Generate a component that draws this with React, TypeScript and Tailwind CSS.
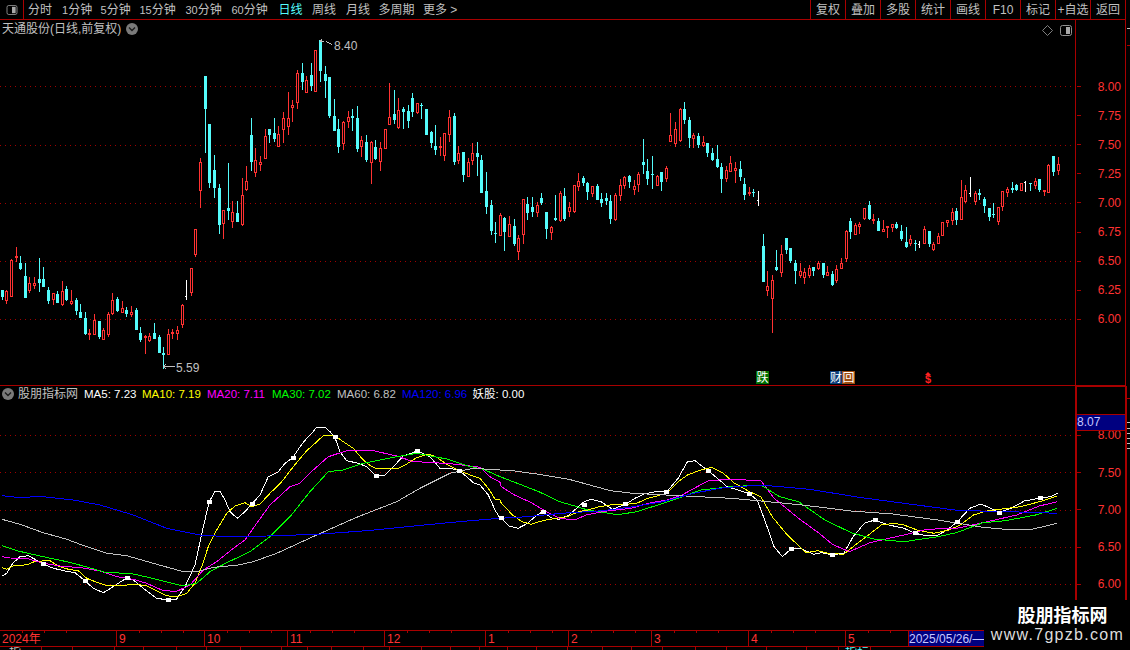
const RED_LINE = 'border-[#a80000]';

type Bar = [string, number, number, number, number];

// [kind, wick top, body top, body bottom, wick bottom]; y values are read at 3x, each block has its own y origin
const barsA: Bar[] = [
  ['c',781,781,802,810],['r',781,783,812,821],['r',688,690,800,800],['r',652,678,683,695],['c',679,699,716,719],
  ['c',699,738,803,803],['r',741,760,782,788],['r',742,760,767,777],['c',685,748,759,785],['c',711,747,770,770],
  ['c',771,780,812,821],['r',790,790,809,824],['c',782,792,818,818],['r',754,784,824,827],['c',768,777,810,812],
  ['r',780,814,821,826],['c',804,810,842,855],['c',822,846,863,863],['c',846,864,911,914],['r',897,910,915,930],
  ['r',853,870,914,914],['c',873,873,920,926],['r',894,900,929,929],['r',847,852,915,920],['r',789,810,851,855],
  ['c',800,808,842,845],['r',813,835,848,850],['c',831,840,851,860],['r',828,847,855,860],['c',834,840,899,899],
  ['c',891,910,930,936],['r',914,918,922,972],['r',910,918,933,936],['c',879,909,926,926],['c',915,921,968,968],
  ['c',951,969,974,1018],['r',897,912,974,974],['r',898,906,911,926],['r',888,901,911,929],['r',822,825,886,895],
  ['w',750,798,800,810],['r',715,715,788,797],['r',598,598,674,680],['r',384,397,482,533],['c',138,138,236,368],
  ['c',282,282,459,473],['c',375,420,473,503],['c',463,474,584,611],['r',541,541,583,626],['c',399,534,542,571],
  ['r',513,546,577,593],['c',513,549,575,577],['r',444,496,584,587],['r',408,454,480,482],['c',264,315,395,422],
  ['r',354,390,428,440],['r',378,397,404,423],['r',297,319,388,388],['c',297,297,315,338],['c',264,309,327,336],
  ['r',288,313,350,350],['r',246,265,299,339],['r',186,264,290,315],['r',210,226,233,276],['r',121,130,218,236],
  ['c',99,129,155,180],['r',139,151,188,188],['c',99,136,167,184],['r',61,61,185,185],['c',30,30,122,155],
  ['c',109,133,152,204],['c',141,141,258,264],['c',207,259,302,302],['c',267,297,351,368],['r',273,277,341,360],
  ['r',243,262,277,293],['c',237,259,264,304],['c',228,264,356,366],['r',319,331,352,381],['c',316,336,390,396],
  ['r',334,337,398,461],
];

const barsB: Bar[] = [
  ['c',180,201,237,240],['r',186,205,245,272],['r',146,148,206,206],['r',10,112,134,134],['c',30,102,120,132],
  ['r',55,91,145,147],['c',82,87,95,147],['c',75,93,122,144],['c',40,54,95,110],['r',70,70,99,101],
  ['c',69,75,77,117],['c',87,87,165,165],['c',153,156,189,204],['c',135,198,209,225],['r',171,198,203,228],
  ['r',160,160,227,243],['r',90,111,164,186],['c',99,108,246,255],['r',198,220,243,252],['c',216,216,285,306],
  ['r',235,247,290,290],['r',189,220,243,255],['c',186,219,231,288],['c',225,240,339,339],['c',276,333,381,402],
  ['c',360,375,453,465],['c',426,459,462,489],['r',399,405,468,468],['c',411,414,456,513],['r',408,432,471,471],
  ['c',417,438,492,498],['r',465,474,516,540],['r',358,358,465,492],['c',351,372,399,420],['c',351,381,396,411],
  ['r',366,375,399,411],['c',339,354,370,375],['c',396,396,447,477],['r',438,441,459,480],['c',345,414,420,423],
  ['r',333,339,423,426],['c',324,348,417,423],['r',366,381,396,411],['r',316,316,396,399],['r',279,304,321,333],
  ['c',288,294,309,318],['c',306,309,336,360],['r',318,318,342,351],['c',312,318,360,360],['c',339,357,369,381],
  ['c',339,354,363,375],['c',345,363,417,432],['r',339,346,420,423],['r',297,316,348,363],['r',288,291,318,327],
  ['c',285,288,306,324],['r',300,319,330,345],['r',276,282,315,336],['c',177,246,255,282],['c',237,273,297,315],
  ['c',228,282,285,327],['r',285,288,318,318],['c',276,276,306,333],['r',258,264,297,306],['r',99,165,186,186],
  ['r',126,147,192,201],['r',84,87,183,186],['c',66,87,120,132],['c',111,120,174,204],['r',159,165,177,204],
  ['c',159,168,195,204],['r',168,186,198,201],['c',189,189,219,231],['c',204,219,240,243],['c',195,237,261,264],
  ['c',249,261,297,339],['r',258,270,297,306],['r',228,249,276,276],['r',246,264,273,309],['c',243,267,291,303],
  ['c',294,312,345,360],['r',321,336,342,348],['c',327,335,338,351],['w',333,360,362,378],
];

const barsC: Bar[] = [
  ['c',282,318,426,426],['r',393,438,453,468],['r',405,420,476,579],['c',330,381,390,393],['r',315,342,399,411],
  ['c',294,294,330,342],['c',324,324,363,369],['c',360,369,393,432],['r',369,393,408,414],['r',384,396,414,432],
  ['r',375,384,408,414],['c',381,381,393,408],['r',363,369,387,390],['c',369,369,405,414],['r',378,396,408,408],
  ['c',393,402,435,438],['r',375,387,423,429],['r',354,369,387,387],['r',270,273,357,366],['c',234,243,276,297],
  ['r',249,255,285,285],['r',246,252,261,282],['r',205,205,238,240],['c',183,195,237,240],['r',222,237,242,252],
  ['c',234,243,273,273],['r',240,267,276,276],['r',259,259,264,294],['r',252,252,264,276],['c',246,252,264,267],
  ['c',255,273,297,303],['c',261,306,321,324],['r',285,297,312,318],['c',300,309,312,333],['w',303,312,314,324],
  ['r',258,267,312,312],['c',273,273,312,321],['r',306,312,330,333],['r',279,288,312,312],['r',246,246,288,288],
  ['r',240,240,249,261],['r',204,216,243,255],['c',204,213,240,255],['r',120,171,240,240],['r',135,150,186,189],
  ['w',111,160,162,171],['r',153,159,186,195],['c',147,159,165,180],['c',171,177,198,219],['c',204,204,231,243],
  ['c',189,222,225,234],['r',201,201,246,255],['r',153,153,201,213],['r',141,147,159,171],['c',126,144,150,159],
  ['c',132,135,150,153],['r',129,130,153,153],['w',123,127,128,156],['c',129,129,132,153],['r',114,123,138,147],
  ['c',117,117,150,156],['r',150,150,155,168],['r',72,75,159,159],['c',48,48,96,108],['r',51,72,93,105],
];

type PxBar = { kind: string; x: number; wt: number; bt: number; bb: number; wb: number };

const toPx = (list: Bar[], y0: number) =>
  list.map(([kind, wt, bt, bb, wb]) => ({
    kind,
    wt: Math.round(y0 + wt / 3),
    bt: Math.round(y0 + bt / 3),
    bb: Math.round(y0 + bb / 3),
    wb: Math.round(y0 + wb / 3),
  }));

const bars: PxBar[] = [...toPx(barsA, 30), ...toPx(barsB, 80), ...toPx(barsC, 140)].map((b, i) => ({
  ...b,
  x: Math.floor(2.3 + i * 4.611) + 0.5,
}));

// indicator lines, two traced pieces: left part 3x from (0,420), right part x scale 2.6576 from (490,440)
const f1 = (p: number[]) => {
  const out: string[] = [];
  for (let i = 0; i < p.length; i += 2) out.push(`${(p[i] / 3).toFixed(1)},${(420 + p[i + 1] / 3).toFixed(1)}`);
  return out;
};
const f2 = (p: number[]) => {
  const out: string[] = [];
  for (let i = 0; i < p.length; i += 2) {
    if (p[i] < 28) continue;
    out.push(`${(490 + p[i] / 2.6576).toFixed(1)},${(440 + p[i + 1] / 3).toFixed(1)}`);
  }
  return out;
};

const lines = [
  {
    color: '#ffffff',
    a: [6,468,20,460,38,430,60,410,85,407,105,418,130,432,160,445,200,454,225,458,256,483,280,505,310,518,330,506,355,490,380,474,400,480,430,505,470,535,505,540,530,537,555,500,585,435,610,320,628,245,645,214,660,214,675,240,690,275,712,295,735,275,755,252,780,225,805,170,835,155,855,130,878,113,900,80,920,55,935,40,950,22,975,22,990,35,1004,50,1020,95,1040,122,1075,130,1100,140,1129,168,1155,165,1180,140,1210,108,1252,93,1290,110,1320,145,1350,145,1378,152,1400,170,1420,188,1440,195,1465,225,1485,270,1500,295],
    b: [28,233,50,258,75,265,100,250,125,225,140,215,165,235,185,238,210,225,230,205,250,185,270,178,295,185,325,208,360,193,385,175,410,162,440,155,470,155,500,115,525,65,545,62,565,80,580,92,610,120,630,140,660,150,690,162,710,180,730,240,755,320,777,350,800,327,825,325,860,343,880,338,910,344,940,340,965,290,995,250,1022,240,1060,255,1100,265,1130,280,1160,287,1190,285,1215,270,1242,245,1275,205,1305,192,1330,205,1352,218,1385,205,1420,183,1463,174,1490,170,1508,160],
  },
  {
    color: '#ffff00',
    a: [6,443,20,448,40,438,60,437,85,433,105,424,150,422,175,438,205,448,235,452,260,475,290,487,320,497,360,498,400,492,440,497,470,512,500,527,530,531,560,520,585,490,605,440,625,380,650,330,680,280,705,258,735,248,755,260,780,252,810,220,845,185,880,140,920,92,945,70,970,47,1004,47,1030,65,1060,85,1085,115,1105,133,1130,147,1160,146,1195,145,1220,132,1250,113,1285,102,1310,112,1340,133,1375,150,1410,165,1440,175,1465,205,1485,237,1500,240],
    b: [30,190,60,225,85,245,110,253,130,245,150,240,175,235,205,230,235,215,260,210,290,200,320,195,360,193,390,190,420,175,470,160,500,125,525,105,560,90,590,82,620,100,650,130,690,155,720,170,750,230,790,285,840,338,870,332,900,340,940,343,965,320,1000,290,1040,255,1075,250,1100,255,1135,270,1180,280,1220,270,1250,255,1285,225,1320,213,1360,207,1410,200,1460,185,1508,168],
  },
  {
    color: '#ff00ff',
    a: [6,410,30,414,80,415,130,430,180,438,250,444,300,453,350,470,400,478,440,490,490,512,530,514,570,495,610,450,650,425,700,385,735,360,770,310,810,255,870,200,900,190,940,150,985,110,1040,92,1120,92,1190,108,1240,125,1290,127,1370,133,1440,142,1470,170,1500,187],
    b: [30,140,65,165,110,188,150,215,185,235,225,240,255,225,310,213,375,205,420,190,470,180,510,165,580,122,640,118,720,122,755,175,820,235,875,280,910,313,955,335,1010,308,1060,295,1100,285,1160,268,1240,265,1310,248,1400,225,1460,198,1508,185],
  },
  {
    color: '#00ff00',
    a: [6,377,50,392,130,410,200,425,250,438,320,458,390,460,450,473,550,498,590,490,630,455,680,428,750,395,810,350,870,290,930,215,985,155,1030,150,1090,130,1180,112,1250,100,1340,117,1400,137,1450,148,1500,170],
    b: [50,120,130,155,185,185,225,198,260,210,340,224,390,215,440,197,500,175,560,150,640,140,720,135,770,170,820,185,890,240,960,278,1020,297,1100,305,1190,290,1240,278,1310,248,1370,242,1450,225,1508,205],
  },
  {
    color: '#c0c0c0',
    a: [6,298,60,313,130,338,200,358,260,380,320,400,380,407,460,430,550,455,590,455,640,442,710,436,760,425,830,400,950,345,1070,292,1190,245,1260,205,1350,160,1420,145,1500,150],
    b: [60,92,130,103,210,118,320,152,380,160,520,168,640,175,720,183,830,195,960,213,1070,222,1190,240,1310,262,1380,269,1440,268,1508,250],
  },
  {
    color: '#0000ff',
    a: [6,227,50,232,130,230,220,240,300,255,400,285,500,325,600,345,680,350,800,348,950,343,1100,332,1250,317,1400,303,1500,295],
    b: [100,230,190,220,300,212,380,200,460,185,540,160,620,143,720,135,850,148,980,172,1100,190,1250,212,1350,214,1508,220],
  },
];

const marks = [
  ...[[130,432],[256,483],[380,474],[505,540],[628,245],[755,252],[878,113],[1004,50],[1129,168],[1252,93],[1378,152]].map(([x, y]) => [x / 3, 420 + y / 3]),
  ...[[28,233],[140,215],[249,195],[360,193],[469,155],[580,92],[689,162],[801,327],[910,344],[1022,240],[1130,280],[1242,245],[1352,218],[1463,174]].map(([x, y]) => [490 + x / 2.6576, 440 + y / 3]),
];

const leftTools = [
  { num: '', unit: '分时', w: 'w-[34px]' },
  { num: '1', unit: '分钟', w: 'w-[38.5px]' },
  { num: '5', unit: '分钟', w: 'w-[39px]' },
  { num: '15', unit: '分钟', w: 'w-[46px]' },
  { num: '30', unit: '分钟', w: 'w-[46px]' },
  { num: '60', unit: '分钟', w: 'w-[47px]' },
  { num: '', unit: '日线', w: 'w-[33.5px]', active: true },
  { num: '', unit: '周线', w: 'w-[34px]' },
  { num: '', unit: '月线', w: 'w-[32.5px]' },
  { num: '', unit: '多周期', w: 'w-[44.5px]' },
  { num: '', unit: '更多 >', w: 'w-[40px]' },
];

const rightTools = ['复权', '叠加', '多股', '统计', '画线', 'F10', '标记', '+自选', '返回'];

const legend = [
  { text: 'MA5: 7.23', color: 'text-white', w: 'w-[58px]' },
  { text: 'MA10: 7.19', color: 'text-[#ffff00]', w: 'w-[65px]' },
  { text: 'MA20: 7.11', color: 'text-[#ff00ff]', w: 'w-[65px]' },
  { text: 'MA30: 7.02', color: 'text-[#00ff00]', w: 'w-[65px]' },
  { text: 'MA60: 6.82', color: 'text-[#c0c0c0]', w: 'w-[65px]' },
  { text: 'MA120: 6.96', color: 'text-[#0000ff]', w: 'w-[70.5px]' },
  { text: '妖股: 0.00', color: 'text-white', w: 'w-[60px]' },
];

const months = [
  { label: '2024年', w: 'w-[116px]' },
  { label: '9', w: 'w-[88px]' },
  { label: '10', w: 'w-[83px]' },
  { label: '11', w: 'w-[97px]' },
  { label: '12', w: 'w-[101px]' },
  { label: '1', w: 'w-[83px]' },
  { label: '2', w: 'w-[83px]' },
  { label: '3', w: 'w-[97px]' },
  { label: '4', w: 'w-[97px]' },
  { label: '5', w: 'w-[63px]' },
];

const tabWidths = [
  'w-[42px]', 'w-[31px]', 'w-[42px]', 'w-[29px]', 'w-[33px]', 'w-[30px]', 'w-[34px]', 'w-[41px]', 'w-[26px]', 'w-[24px]',
  'w-[32px]', 'w-[26px]', 'w-[32px]', 'w-[29px]', 'w-[29px]', 'w-[28px]', 'w-[29px]', 'w-[31px]', 'w-[35px]', 'w-[29px]',
  'w-[31px]', 'w-[33px]', 'w-[31px]', 'w-[40px]', 'w-[40px]', 'w-[32px]', 'w-[32px]',
];

const upperPrices = ['8.00', '7.75', '7.50', '7.25', '7.00', '6.75', '6.50', '6.25', '6.00'];
const lowerPrices = ['8.00', '7.50', '7.00', '6.50', '6.00'];

function PanelIcon({ className }: { className: string }) {
  return (
    <svg viewBox="0 0 12 11" className={className}>
      <rect x="0.5" y="0.5" width="11" height="10" rx="2" fill="none" stroke="#909090" />
      <rect x="6" y="2" width="4" height="7" fill="#a8a8a8" />
    </svg>
  );
}

function Chevron({ className }: { className: string }) {
  return (
    <svg viewBox="0 0 12 12" className={className}>
      <circle cx="6" cy="6" r="6" fill="#7a7a7a" />
      <path d="M3 4.5 L6 7.5 L9 4.5" fill="none" stroke="#1c1c1c" strokeWidth="1.4" />
    </svg>
  );
}

function GridLines({ ys }: { ys: number[] }) {
  return (
    <>
      {ys.map((y) => (
        <line key={y} x1="0" x2="1075" y1={y} y2={y} stroke="#a00000" strokeDasharray="1 4" />
      ))}
    </>
  );
}

function Candles() {
  return (
    <>
      {bars.map((b, i) => {
        if (b.kind === 'w') {
          return (
            <g key={i} stroke="#ffffff">
              <line x1={b.x} x2={b.x} y1={b.wt} y2={b.wb} />
              <line x1={b.x - 2} x2={b.x} y1={b.bt + 0.5} y2={b.bt + 0.5} />
            </g>
          );
        }
        if (b.kind === 'c') {
          return (
            <g key={i}>
              <line x1={b.x} x2={b.x} y1={b.wt} y2={b.wb} stroke="#54fcfc" />
              <rect x={b.x - 1.5} y={b.bt} width="3" height={Math.max(b.bb - b.bt, 1)} fill="#54fcfc" />
            </g>
          );
        }
        return (
          <g key={i} stroke="#ff3232">
            <line x1={b.x} x2={b.x} y1={b.wt} y2={b.wb} />
            <rect x={b.x - 1} y={b.bt + 0.5} width="2" height={Math.max(b.bb - b.bt - 1, 1)} fill="#000000" />
          </g>
        );
      })}
    </>
  );
}

function Indicators() {
  return (
    <>
      {lines.map((l) => (
        <polyline key={l.color} points={[...f1(l.a), ...f2(l.b)].join(' ')} fill="none" stroke={l.color} />
      ))}
      {marks.map(([x, y], i) => (
        <rect key={i} x={Math.round(x) - 2} y={Math.round(y) - 2} width="5" height="4" fill="#ffffff" />
      ))}
    </>
  );
}

export default function App() {
  return (
    <div className="relative flex h-[650px] w-[1130px] flex-col overflow-hidden bg-black font-['Liberation_Sans','Noto_Sans_CJK_SC',sans-serif] text-[12px] leading-[12px] text-[#c0c0c0]">
      {/* top toolbar */}
      <div className={`flex h-[20px] w-[1126px] shrink-0 items-center border-b ${RED_LINE}`}>
        <div className={`flex h-full w-[24px] items-center justify-center border-r ${RED_LINE}`}>
          <PanelIcon className="h-[10px] w-[12px]" />
        </div>
        <div className="flex w-[786px] items-center pl-[4px]">
          {leftTools.map((t) => (
            <span key={t.num + t.unit} className={`${t.w} whitespace-nowrap ${t.active ? 'text-[#54fcfc]' : ''}`}>
              {t.num && <span className="text-[11px]">{t.num}</span>}
              {t.unit}
            </span>
          ))}
        </div>
        {rightTools.map((t) => (
          <div key={t} className={`flex h-full w-[35px] items-center justify-center whitespace-nowrap border-l ${RED_LINE}`}>
            {t}
          </div>
        ))}
        <div className={`h-full border-l ${RED_LINE}`} />
      </div>

      <div className="flex h-[610px] shrink-0">
        {/* charts */}
        <div className={`flex w-[1076px] flex-col border-r ${RED_LINE}`}>
          <div className={`relative h-[366px] border-b ${RED_LINE}`}>
            <svg viewBox="0 20 1075 365" className="block h-[365px] w-[1075px]" shapeRendering="crispEdges">
              <GridLines ys={[86.5, 145.5, 203.5, 261.5, 319.5]} />
              <Candles />
              <path d="M320 41.5 L324 41.5 M320 41.5 L322 39.5 M326 41.5 L332 44.5 M163 366.5 L175 366.5 M163 366.5 L166 364.5 M163 366.5 L166 368.5" stroke="#c0c0c0" fill="none" />
            </svg>
            <span className="absolute left-[2px] top-[3px] flex items-center gap-[5px] whitespace-nowrap">
              天通股份(日线,前复权)
              <Chevron className="h-[12px] w-[12px]" />
            </span>
            <span className="absolute left-[334px] top-[20px]">8.40</span>
            <span className="absolute left-[176px] top-[342px]">5.59</span>
            <svg viewBox="0 0 11 11" className="absolute left-[1042px] top-[5px] h-[11px] w-[11px]">
              <path d="M5.5 0.5 L10.5 5.5 L5.5 10.5 L0.5 5.5 Z" fill="none" stroke="#808080" />
            </svg>
            <PanelIcon className="absolute left-[1060px] top-[5px] h-[11px] w-[12px]" />
            {/* event markers along the bottom of the pane */}
            <span className="absolute left-[756px] top-[351px] flex h-[13px] w-[13px] items-center justify-center bg-[#007000] text-white">跌</span>
            <span className="absolute left-[830px] top-[351px] flex h-[13px] w-[12px] items-center justify-center bg-[#0c3c78] text-white">财</span>
            <span className="absolute left-[842px] top-[351px] flex h-[13px] w-[13px] items-center justify-center bg-[#a04c10] text-white">回</span>
            <span className="absolute left-[924px] top-[352px] flex w-[8px] flex-col items-center text-[11px] font-bold leading-[9px] text-[#ff2020]">
              <span className="h-0 w-0 border-x-[3px] border-b-[3px] border-x-transparent border-b-[#ff2020]" />
              $
            </span>
          </div>

          <div className="relative flex-1">
            <svg viewBox="0 386 1075 244" className="block h-[244px] w-[1075px]" shapeRendering="crispEdges">
              <GridLines ys={[435.5, 472.5, 510.5, 547.5, 584.5]} />
              <Indicators />
            </svg>
            <div className="absolute left-[2px] top-[2px] flex items-center whitespace-nowrap text-[11.5px]">
              <Chevron className="mr-[4px] h-[12px] w-[12px]" />
              <span className="w-[66px] text-[12px]">股朋指标网</span>
              {legend.map((l) => (
                <span key={l.text} className={`${l.w} ${l.color}`}>
                  {l.text}
                </span>
              ))}
            </div>
          </div>
        </div>

        {/* price axis */}
        <div className="flex w-[51px] flex-col text-[#ff3232]">
          <div className={`h-[366px] w-[50px] border-r border-b pt-[52px] ${RED_LINE}`}>
            {upperPrices.map((p) => (
              <div key={p} className="flex h-[29.1px] items-center justify-between pl-[1px] pr-[4px]">
                <span className="h-px w-[4px] bg-[#a80000]" />
                {p}
              </div>
            ))}
          </div>
          <div className={`relative flex-1 border-l border-t border-r-2 pt-[29.6px] ${RED_LINE}`}>
            {lowerPrices.map((p) => (
              <div key={p} className="flex h-[37.3px] items-center justify-between pr-[4px]">
                <span className="h-px w-[4px] bg-[#a80000]" />
                {p}
              </div>
            ))}
            <div className={`absolute inset-x-0 top-[27px] h-[17px] border-y bg-[#000080] pt-[1px] text-[#c8c8ff] ${RED_LINE}`}>8.07</div>
          </div>
        </div>

        {/* scroll ticks at the right edge */}
        <div className="flex w-[3px] flex-col">
          <span className="mt-[8px] h-px bg-[#c0c0c0]" />
          <span className="mt-[16px] h-px bg-[#a80000]" />
          <span className="mt-[352px] h-px bg-[#a80000]" />
          <span className="mt-[23px] h-px bg-[#c0c0c0]" />
          <span className="mt-[5px] h-px bg-[#c0c0c0]" />
          <span className="mt-[4px] h-px bg-[#c0c0c0]" />
          <span className="mt-[4px] h-px bg-[#c0c0c0]" />
          <span className="mt-[4px] h-px bg-[#c0c0c0]" />
          <span className="mt-[4px] h-px bg-[#c0c0c0]" />
        </div>
      </div>

      {/* date axis */}
      <div className={`flex h-[17px] w-[984px] shrink-0 items-stretch border-y ${RED_LINE}`}>
        {months.map((m, i) => (
          <div key={m.label} className={`relative flex ${m.w} items-center pl-[2px] text-[#ff3232] ${i > 0 ? `border-l ${RED_LINE}` : ''}`}>
            {m.label}
            <span className="absolute left-[22px] top-0 h-[2px] w-px bg-[#a80000]" />
            <span className="absolute left-[44px] top-0 h-[2px] w-px bg-[#a80000]" />
            <span className="absolute left-[66px] top-0 h-[2px] w-px bg-[#a80000]" />
          </div>
        ))}
        <div className={`flex flex-1 items-center overflow-hidden whitespace-nowrap border-l bg-[#000080] text-[#c8c8ff] ${RED_LINE}`}>2025/05/26/—</div>
      </div>

      {/* bottom tabs, only their top pixels fit in the window */}
      <div className="flex h-[3px] w-[984px] shrink-0 overflow-hidden">
        {tabWidths.map((w, i) => (
          <div key={i} className={`${w} shrink-0 border-r ${RED_LINE} ${i === 26 ? 'pl-[6px] text-[#54fcfc]' : 'pl-[9px]'}`}>
            {i === 0 ? '指' : i === 26 ? '指标' : ''}
          </div>
        ))}
      </div>

      {/* watermark */}
      <div className="absolute bottom-0 right-0 flex h-[50px] w-[146px] flex-col items-center bg-black pt-[6px] text-center">
        <span className="ml-[11px] text-[18px] font-bold leading-[20px] text-white">股朋指标网</span>
        <span className="whitespace-nowrap pl-[1px] text-[16px] leading-[18px] tracking-[1.3px] text-[#dddddd]">www.7gpzb.com</span>
      </div>
    </div>
  );
}
